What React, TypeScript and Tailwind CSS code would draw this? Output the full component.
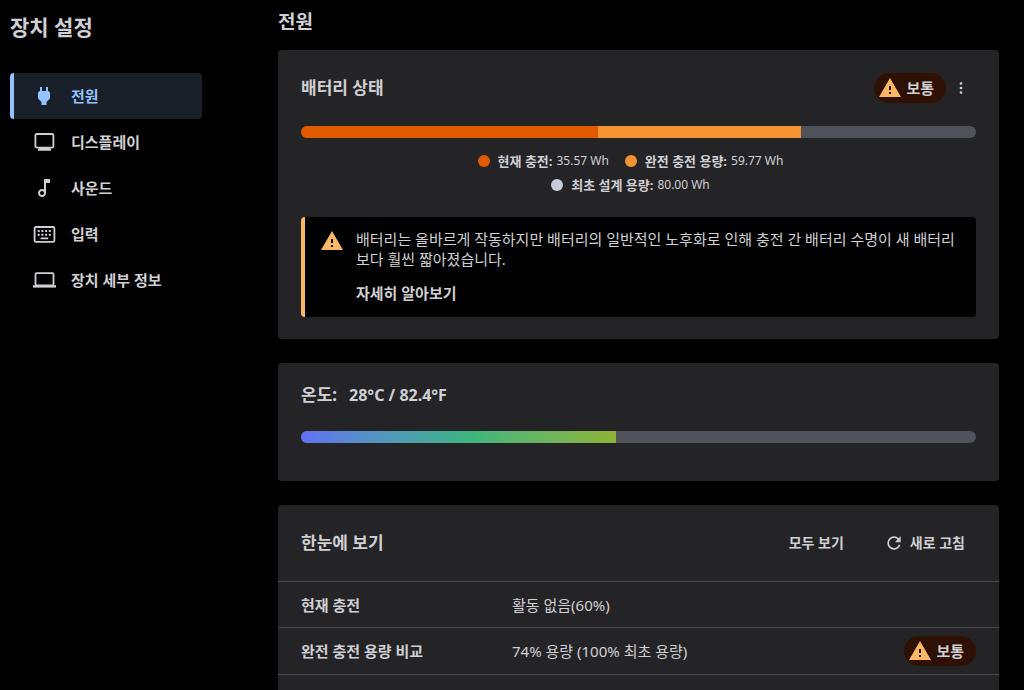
import React, { useState } from 'react';
import { clsx } from 'clsx';

interface IconProps {
  className?: string;
}

function PlugIcon({ className }: IconProps) {
  return (
    <svg viewBox="0 0 24 24" fill="currentColor" className={className} aria-hidden="true">
      <path d="M16 7V3H14V7H10V3H8V7C7 7 6 8 6 9V14.5L9.5 18V21H14.5V18L18 14.5V9C18 8 17 7 16 7Z" />
    </svg>
  );
}

function DisplayIcon({ className }: IconProps) {
  return (
    <svg viewBox="0 0 24 24" fill="currentColor" className={className} aria-hidden="true">
      <rect x="3.4" y="4" width="18" height="13.6" rx="1.4" fill="none" stroke="currentColor" strokeWidth="1.8" />
      <path d="M7.5 17.5H17.5V18.2L19 18.8V20.8H6V18.8L7.5 18.2Z" />
    </svg>
  );
}

function SoundIcon({ className }: IconProps) {
  return (
    <svg viewBox="0 0 24 24" fill="currentColor" className={className} aria-hidden="true">
      <path d="M12 3l.01 10.55c-.59-.34-1.27-.55-2-.55C7.79 13 6 14.79 6 17s1.79 4 4.01 4S14 19.21 14 17V7h4V3h-6zm-1.99 16c-1.1 0-2-.9-2-2s.9-2 2-2 2 .9 2 2-.9 2-2 2z" />
    </svg>
  );
}

function KeyboardIcon({ className }: IconProps) {
  return (
    <svg viewBox="0 0 24 24" fill="currentColor" className={className} aria-hidden="true">
      <rect x="2.6" y="5" width="19.8" height="14.8" rx="1.4" fill="none" stroke="currentColor" strokeWidth="1.8" />
      <path d="M5.7 8h2v2h-2zM9.4 8h2v2h-2zM13.1 8h2v2h-2zM16.8 8h2v2h-2zM5.7 11.7h2v2h-2zM9.4 11.7h2v2h-2zM13.1 11.7h2v2h-2zM16.8 11.7h2v2h-2zM8.6 15.6h7.6v1.6h-7.6z" />
    </svg>
  );
}

function LaptopIcon({ className }: IconProps) {
  return (
    <svg viewBox="0 0 24 24" fill="currentColor" className={className} aria-hidden="true">
      <rect x="3.5" y="5.2" width="18" height="12.2" rx="1.2" fill="none" stroke="currentColor" strokeWidth="1.8" />
      <path d="M1 17.2H24V19.6H1Z" />
    </svg>
  );
}

function AlertIcon({ className }: IconProps) {
  return (
    <svg viewBox="0 0 24 24" fill="currentColor" className={className} aria-hidden="true">
      <path d="M13 14H11V10H13M13 18H11V16H13M1 21H23L12 2L1 21Z" />
    </svg>
  );
}

function RefreshIcon({ className }: IconProps) {
  return (
    <svg viewBox="0 0 24 24" fill="currentColor" className={className} aria-hidden="true">
      <path d="M17.65 6.35C16.2 4.9 14.21 4 12 4A8 8 0 0 0 4 12A8 8 0 0 0 12 20C15.73 20 18.84 17.45 19.73 14H17.65C16.83 16.33 14.61 18 12 18A6 6 0 0 1 6 12A6 6 0 0 1 12 6C13.66 6 15.14 6.69 16.22 7.78L13 11H20V4L17.65 6.35Z" />
    </svg>
  );
}

function MoreIcon({ className }: IconProps) {
  return (
    <svg viewBox="0 0 24 24" fill="currentColor" className={className} aria-hidden="true">
      <circle cx="12" cy="6" r="1.8" />
      <circle cx="12" cy="12" r="1.8" />
      <circle cx="12" cy="18" r="1.8" />
    </svg>
  );
}

const navItems = [
  { id: 'power', label: '전원', icon: PlugIcon },
  { id: 'display', label: '디스플레이', icon: DisplayIcon },
  { id: 'sound', label: '사운드', icon: SoundIcon },
  { id: 'input', label: '입력', icon: KeyboardIcon },
  { id: 'details', label: '장치 세부 정보', icon: LaptopIcon },
];

const legend = [
  { label: '현재 충전:', value: '35.57 Wh', dot: 'bg-[#e25a00]' },
  { label: '완전 충전 용량:', value: '59.77 Wh', dot: 'bg-[#f59330]' },
  { label: '최초 설계 용량:', value: '80.00 Wh', dot: 'bg-[#c8ccd8]' },
];

const batterySegments = [
  { width: 44, color: 'bg-[#e25a00]' },
  { width: 30, color: 'bg-[#f59330]' },
];

const rows = [
  { label: '현재 충전', value: '활동 없음(60%)', warn: false },
  { label: '완전 충전 용량 비교', value: '74% 용량 (100% 최초 용량)', warn: true },
  { label: '', value: '', warn: false },
];

function StatusPill() {
  return (
    <span className="inline-flex h-[30px] items-center gap-1 rounded-full bg-[#2e1005] pr-3 pl-1 text-[15px] font-bold">
      <AlertIcon className="h-6 w-6 text-[#fab866]" />
      보통
    </span>
  );
}

export default function App() {
  const [active, setActive] = useState('power');

  return (
    <div className="flex h-screen overflow-hidden bg-black pr-[25px] pl-[10px] font-['Noto_Sans','Noto_Sans_CJK_KR',sans-serif] text-[15px] leading-5 text-[#d0d0d4]">
      <aside className="w-48 shrink-0 pt-3">
        <h1 className="text-[21px] leading-[30px] font-bold">장치 설정</h1>
        <nav className="mt-[31px] flex flex-col">
          {navItems.map(item => (
            <button
              key={item.id}
              onClick={() => setActive(item.id)}
              className={clsx(
                'flex h-[46px] items-center gap-[15px] rounded border-l-4 pl-[18px] text-left font-bold',
                active === item.id ? 'border-[#94c4ff] bg-[#1a202a] text-[#94c4ff]' : 'border-transparent'
              )}
            >
              <item.icon className="h-6 w-6" />
              {item.label}
            </button>
          ))}
        </nav>
      </aside>

      <main className="ml-[76px] min-w-0 flex-1 pt-2">
        <h2 className="text-[19px] leading-7 font-bold">전원</h2>

        <section className="mt-[14px] rounded bg-[#242426] px-[23px] pt-[23px] pb-[22px]">
          <div className="flex items-center justify-between">
            <h3 className="text-[17px] leading-6 font-bold">배터리 상태</h3>
            <div className="flex items-center">
              <StatusPill />
              <button aria-label="더 보기" className="flex h-[30px] w-[30px] items-center justify-center">
                <MoreIcon className="h-[18px] w-[18px]" />
              </button>
            </div>
          </div>

          <div className="mt-[23px] flex h-3 overflow-hidden rounded-full bg-[#52525a]">
            {batterySegments.map(segment => (
              <div key={segment.color} className={segment.color} style={{ width: `${segment.width}%` }}></div>
            ))}
          </div>

          <ul className="mx-auto mt-[11px] flex max-w-[450px] flex-wrap justify-center text-[13px] leading-6">
            {legend.map(item => (
              <li key={item.label} className="mr-4 flex items-center">
                <span className={clsx('mr-2 h-3 w-3 rounded-full', item.dot)}></span>
                <span className="mr-1 font-bold">{item.label}</span>
                <span className="text-[12px]">{item.value}</span>
              </li>
            ))}
          </ul>

          <div className="mt-5 flex gap-3 rounded border-l-4 border-[#fab866] bg-black pt-3 pr-3 pb-[14px] pl-[15px]">
            <AlertIcon className="h-6 w-6 shrink-0 text-[#fab866]" />
            <div>
              <p>배터리는 올바르게 작동하지만 배터리의 일반적인 노후화로 인해 충전 간 배터리 수명이 새 배터리보다 훨씬 짧아졌습니다.</p>
              <a href="#learn-more" className="mt-[14px] block font-bold">자세히 알아보기</a>
            </div>
          </div>
        </section>

        <section className="mt-6 rounded bg-[#242426] px-[23px] pt-5 pb-[38px]">
          <h3 className="flex gap-3 leading-6 font-bold">
            <span className="text-[17px]">온도:</span>
            <span className="text-[16px]">28°C / 82.4°F</span>
          </h3>
          <div className="mt-6 h-3 overflow-hidden rounded-full bg-[#52525a]">
            <div
              className="h-full bg-linear-to-r from-[#6370f0] via-[#3eb57c] via-55% to-[#8db434]"
              style={{ width: '46.7%' }}
            ></div>
          </div>
        </section>

        <section className="mt-6 rounded bg-[#242426]">
          <div className="flex h-[76px] items-center justify-between px-[23px]">
            <h3 className="text-[17px] leading-6 font-bold">한눈에 보기</h3>
            <div className="flex gap-[18px] text-[14px] font-bold">
              <button className="px-[11px] py-1">모두 보기</button>
              <button className="flex items-center gap-[6px] px-[11px] py-1">
                <RefreshIcon className="h-5 w-5" />
                새로 고침
              </button>
            </div>
          </div>
          <table className="w-full text-left">
            <tbody>
              {rows.map((row, index) => (
                <tr key={index} className="h-[46px] border-t border-[#4a4a50]">
                  <th scope="row" className="w-[234px] pl-[23px] font-bold">{row.label}</th>
                  <td>{row.value}</td>
                  <td className="py-2 pr-[23px]">
                    <div className="flex justify-end">{row.warn && <StatusPill />}</div>
                  </td>
                </tr>
              ))}
            </tbody>
          </table>
        </section>
      </main>
    </div>
  );
}
